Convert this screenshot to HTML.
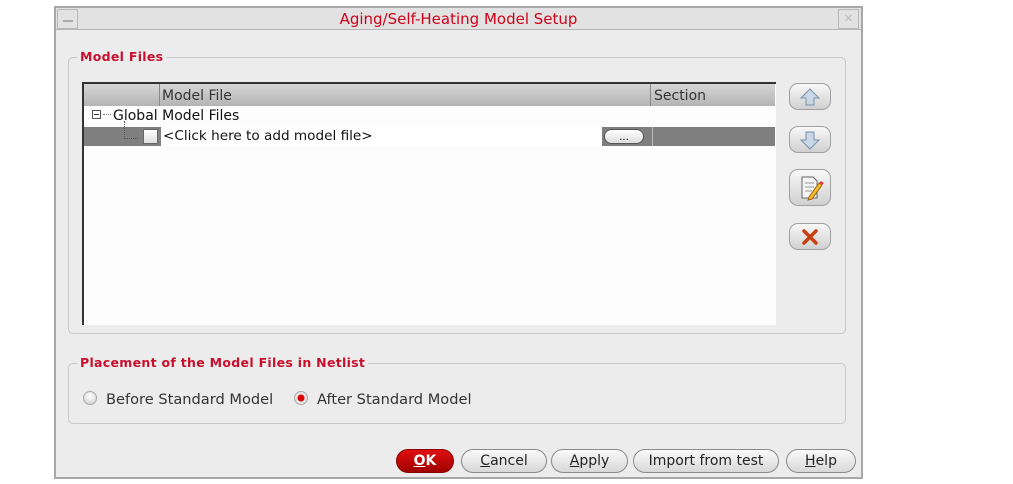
<!DOCTYPE html><html><head><style>
body{margin:0;width:1013px;height:484px;background:#fff;position:relative;font-family:"DejaVu Sans","Liberation Sans",sans-serif;font-size:14px;overflow:hidden}
.a{position:absolute;box-sizing:border-box}
.btn{position:absolute;box-sizing:border-box;border:1px solid #8a8a8a;border-radius:12px;background:linear-gradient(#fafafa,#d8d8d8);text-align:center;line-height:23px;color:#222;font-size:14px}
.sb{position:absolute;box-sizing:border-box;border:1px solid #a0a0a0;border-radius:9px;background:linear-gradient(#f8f8f8,#d0d0d0);left:789px;width:42px}
.grp{position:absolute;border:1px solid #c8c8c8;border-radius:5px;box-sizing:border-box}
.lbl{position:absolute;background:#ececec;color:#c8102e;font-weight:bold;font-size:12.5px;padding:0 3px;letter-spacing:.3px}
</style></head><body>
<div class="a" style="left:54px;top:6px;width:809px;height:473px;background:#ececec;border:2px solid #a8a8a8"></div>
<div class="a" style="left:56px;top:8px;width:805px;height:22px;background:#e2e2e2;border-bottom:1px solid #b5b5b5"></div>
<div class="a" style="left:57px;top:9px;width:21px;height:20px;border:1px solid #b8b8b8"><div class="a" style="left:5px;top:10px;width:10px;height:2px;background:#aaa"></div></div>
<div class="a" style="left:838px;top:9px;width:21px;height:20px;border:1px solid #b8b8b8;color:#bbb;font-size:11px;text-align:center;line-height:18px">✕</div>
<div class="a" style="left:56px;top:8px;width:805px;text-align:center;line-height:22px;color:#d0021b;font-size:15px">Aging/Self-Heating Model Setup</div>

<div class="grp" style="left:68px;top:57px;width:778px;height:277px"></div>
<div class="lbl" style="left:77px;top:49px">Model Files</div>
<div class="a" style="left:82px;top:82px;width:694px;height:243px;background:#fdfdfd;border-top:2px solid #333;border-left:2px solid #333"></div>
<div class="a" style="left:84px;top:84px;width:691px;height:22px;background:linear-gradient(#d6d6d6,#b4b4b4)"></div>
<div class="a" style="left:159px;top:84px;width:1px;height:22px;background:#888"></div>
<div class="a" style="left:650px;top:84px;width:1px;height:22px;background:#888"></div>
<div class="a" style="left:162px;top:85px;line-height:22px;color:#333">Model File</div>
<div class="a" style="left:654px;top:85px;line-height:22px;color:#333">Section</div>
<div class="a" style="left:92px;top:110px;width:9px;height:9px;border:1px solid #555;background:#fff"><div class="a" style="left:1px;top:3px;width:5px;height:1px;background:#333"></div></div>
<div class="a" style="left:103px;top:114px;width:8px;border-top:1px dotted #777"></div>
<div class="a" style="left:113px;top:107px;line-height:19px;color:#111">Global Model Files</div>
<div class="a" style="left:84px;top:127px;width:691px;height:19px;background:#7f7f7f"></div>
<div class="a" style="left:124px;top:121px;width:14px;height:18px;border-left:1px dotted #555;border-bottom:1px dotted #555"></div>
<div class="a" style="left:143px;top:129px;width:15px;height:15px;border:1px solid #666;background:linear-gradient(#fff,#ddd)"></div>
<div class="a" style="left:161px;top:127px;width:441px;height:19px;background:#fff;line-height:19px;color:#111;padding-left:2px;font-size:13.6px">&lt;Click here to add model file&gt;</div>
<div class="a" style="left:604px;top:129px;width:40px;height:15px;border:1px solid #555;border-radius:8px;background:linear-gradient(#fff,#ddd);font-size:10px;text-align:center;line-height:15px">...</div>
<div class="a" style="left:652px;top:127px;width:1px;height:19px;background:#bbb"></div>

<div class="sb" style="top:83px;height:27px"><svg width="40" height="25"><path d="M20 5 L29 14 L24 14 L24 21 L16 21 L16 14 L11 14 Z" fill="#c8d8e8" stroke="#7890a8"/></svg></div>
<div class="sb" style="top:126px;height:27px"><svg width="40" height="25"><path d="M20 22 L29 13 L24 13 L24 5 L16 5 L16 13 L11 13 Z" fill="#c8d8e8" stroke="#7890a8"/></svg></div>
<div class="sb" style="top:169px;height:37px"><svg width="40" height="35"><path d="M12 7h11l4 4v17H12z" fill="#f4f4f4" stroke="#666"/><path d="M15 13h9M15 17h9M15 21h7" stroke="#999"/><path d="M19 27 L29 13 L32 15 L22 29 L18 30 Z" fill="#f0c030" stroke="#a06010"/><path d="M29 13l2-2 3 2-2 2z" fill="#e04050"/></svg></div>
<div class="sb" style="top:223px;height:27px"><svg width="40" height="25"><path d="M14 7 L26 19 M26 7 L14 19" stroke="#c84010" stroke-width="3.5" stroke-linecap="round"/></svg></div>

<div class="grp" style="left:68px;top:363px;width:778px;height:61px"></div>
<div class="lbl" style="left:77px;top:355px">Placement of the Model Files in Netlist</div>
<div class="a" style="left:83px;top:391px;width:14px;height:14px;border-radius:50%;border:1px solid #aaa;background:radial-gradient(circle at 50% 35%,#fff,#ccc)"></div>
<div class="a" style="left:106px;top:390px;line-height:19px;color:#333;font-size:14.6px">Before Standard Model</div>
<div class="a" style="left:294px;top:391px;width:14px;height:14px;border-radius:50%;border:1px solid #aaa;background:radial-gradient(circle,#d00 0,#d00 3px,#eee 4px,#ccc)"></div>
<div class="a" style="left:317px;top:390px;line-height:19px;color:#333;font-size:14.6px">After Standard Model</div>

<div class="btn" style="left:396px;top:449px;width:58px;height:24px;background:linear-gradient(#e01010,#a00000);border-color:#800;color:#fff;font-weight:bold"><u>O</u>K</div>
<div class="btn" style="left:461px;top:449px;width:86px;height:24px"><u>C</u>ancel</div>
<div class="btn" style="left:551px;top:449px;width:77px;height:24px"><u>A</u>pply</div>
<div class="btn" style="left:633px;top:449px;width:146px;height:24px">Import from test</div>
<div class="btn" style="left:786px;top:449px;width:70px;height:24px"><u>H</u>elp</div>
</body></html>
